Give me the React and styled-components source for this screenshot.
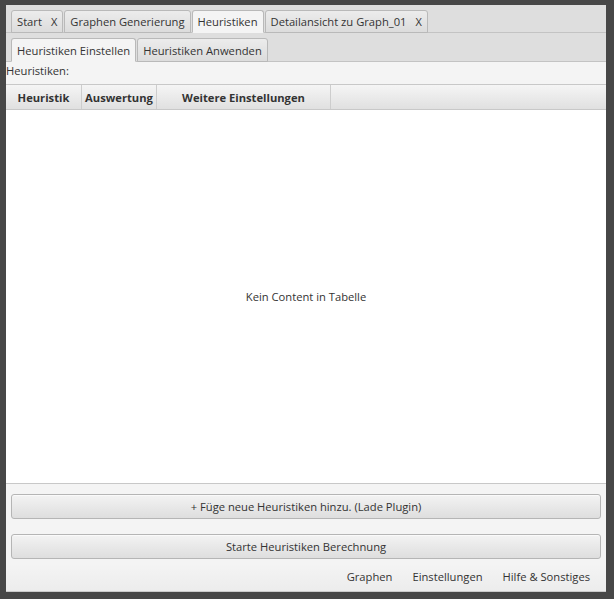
import React from 'react'
import styled, { createGlobalStyle, css } from 'styled-components'

const Global = createGlobalStyle`
  html, body {
    margin: 0;
    height: 100%;
    background: #474747;
  }
  #root {
    height: 100%;
  }
  * {
    box-sizing: border-box;
  }
`

const Window = styled.div`
  position: fixed;
  inset: 5px 8px 7px 6px;
  display: flex;
  flex-direction: column;
  background: #f4f4f4;
  font-family: "Open Sans", "Noto Sans", sans-serif;
  font-size: 11.2px;
  color: #333;
  overflow: hidden;
`

const TabHeader = styled.div`
  display: flex;
  align-items: flex-end;
  gap: 1px;
  height: ${p => p.h}px;
  padding-left: 5px;
  background: #dedede;
  border-bottom: 1px solid #c3c3c3;
  flex-shrink: 0;
`

const Tab = styled.div`
  display: flex;
  align-items: center;
  gap: 9px;
  height: ${p => p.h}px;
  margin-bottom: -1px;
  padding: 0 5px;
  border: 1px solid #b9b9b9;
  border-radius: 3px 3px 0 0;
  background: linear-gradient(#ececec, #dcdcdc);
  white-space: nowrap;

  ${p => p.selected && css`
    background: #f4f4f4;
    border-bottom-color: #f4f4f4;
  `}
`

const Close = styled.span`
  font-size: 11px;
`

const Label = styled.div`
  height: 22px;
  padding-top: 1px;
  line-height: 15px;
  flex-shrink: 0;
`

const Table = styled.div`
  flex: 1;
  display: flex;
  flex-direction: column;
  background: #fff;
  border-top: 1px solid #c8c8c8;
  border-bottom: 1px solid #c8c8c8;
`

const HeaderRow = styled.div`
  display: flex;
  height: 25px;
  background: linear-gradient(#f5f5f5, #e0e0e0);
  border-bottom: 1px solid #c8c8c8;
  flex-shrink: 0;
`

const HeaderCell = styled.div`
  display: flex;
  align-items: center;
  justify-content: center;
  width: ${p => p.w ? `${p.w}px` : 'auto'};
  flex: ${p => p.w ? 'none' : 1};
  font-weight: bold;
  border-right: ${p => p.w ? '1px solid #cdcdcd' : 'none'};
`

const Placeholder = styled.div`
  flex: 1;
  display: flex;
  align-items: center;
  justify-content: center;
`

const Actions = styled.div`
  display: flex;
  flex-direction: column;
  gap: 15px;
  padding: 10px 5px 5px;
  flex-shrink: 0;
`

const Button = styled.button`
  height: 25px;
  font: inherit;
  color: #333;
  border: 1px solid #b5b5b5;
  border-radius: 3px;
  background: linear-gradient(#f3f3f3, #dedede);
  box-shadow: inset 0 1px 0 #fafafa;
`

const MenuBar = styled.div`
  display: flex;
  justify-content: flex-end;
  align-items: center;
  height: 28px;
  padding: 0 16px 2px 0;
  background: linear-gradient(#f4f4f4, #ececec);
  border-bottom: 1px solid #cbcbcb;
  flex-shrink: 0;
`

const MenuItem = styled.div`
  padding: 0 10px;
  &:last-child {
    padding-right: 0;
  }
`

export default function App() {
  return (
    <>
      <Global />
      <Window>
        <TabHeader h={28}>
          <Tab h={23}>Start <Close>X</Close></Tab>
          <Tab h={23}>Graphen Generierung</Tab>
          <Tab h={23} selected>Heuristiken</Tab>
          <Tab h={23}>Detailansicht zu Graph_01 <Close>X</Close></Tab>
        </TabHeader>
        <TabHeader h={29}>
          <Tab h={24} selected>Heuristiken Einstellen</Tab>
          <Tab h={24}>Heuristiken Anwenden</Tab>
        </TabHeader>
        <Label>Heuristiken:</Label>
        <Table>
          <HeaderRow>
            <HeaderCell w={76}>Heuristik</HeaderCell>
            <HeaderCell w={75}>Auswertung</HeaderCell>
            <HeaderCell w={174}>Weitere Einstellungen</HeaderCell>
            <HeaderCell />
          </HeaderRow>
          <Placeholder>Kein Content in Tabelle</Placeholder>
        </Table>
        <Actions>
          <Button>+ Füge neue Heuristiken hinzu. (Lade Plugin)</Button>
          <Button>Starte Heuristiken Berechnung</Button>
        </Actions>
        <MenuBar>
          <MenuItem>Graphen</MenuItem>
          <MenuItem>Einstellungen</MenuItem>
          <MenuItem>Hilfe &amp; Sonstiges</MenuItem>
        </MenuBar>
      </Window>
    </>
  )
}
